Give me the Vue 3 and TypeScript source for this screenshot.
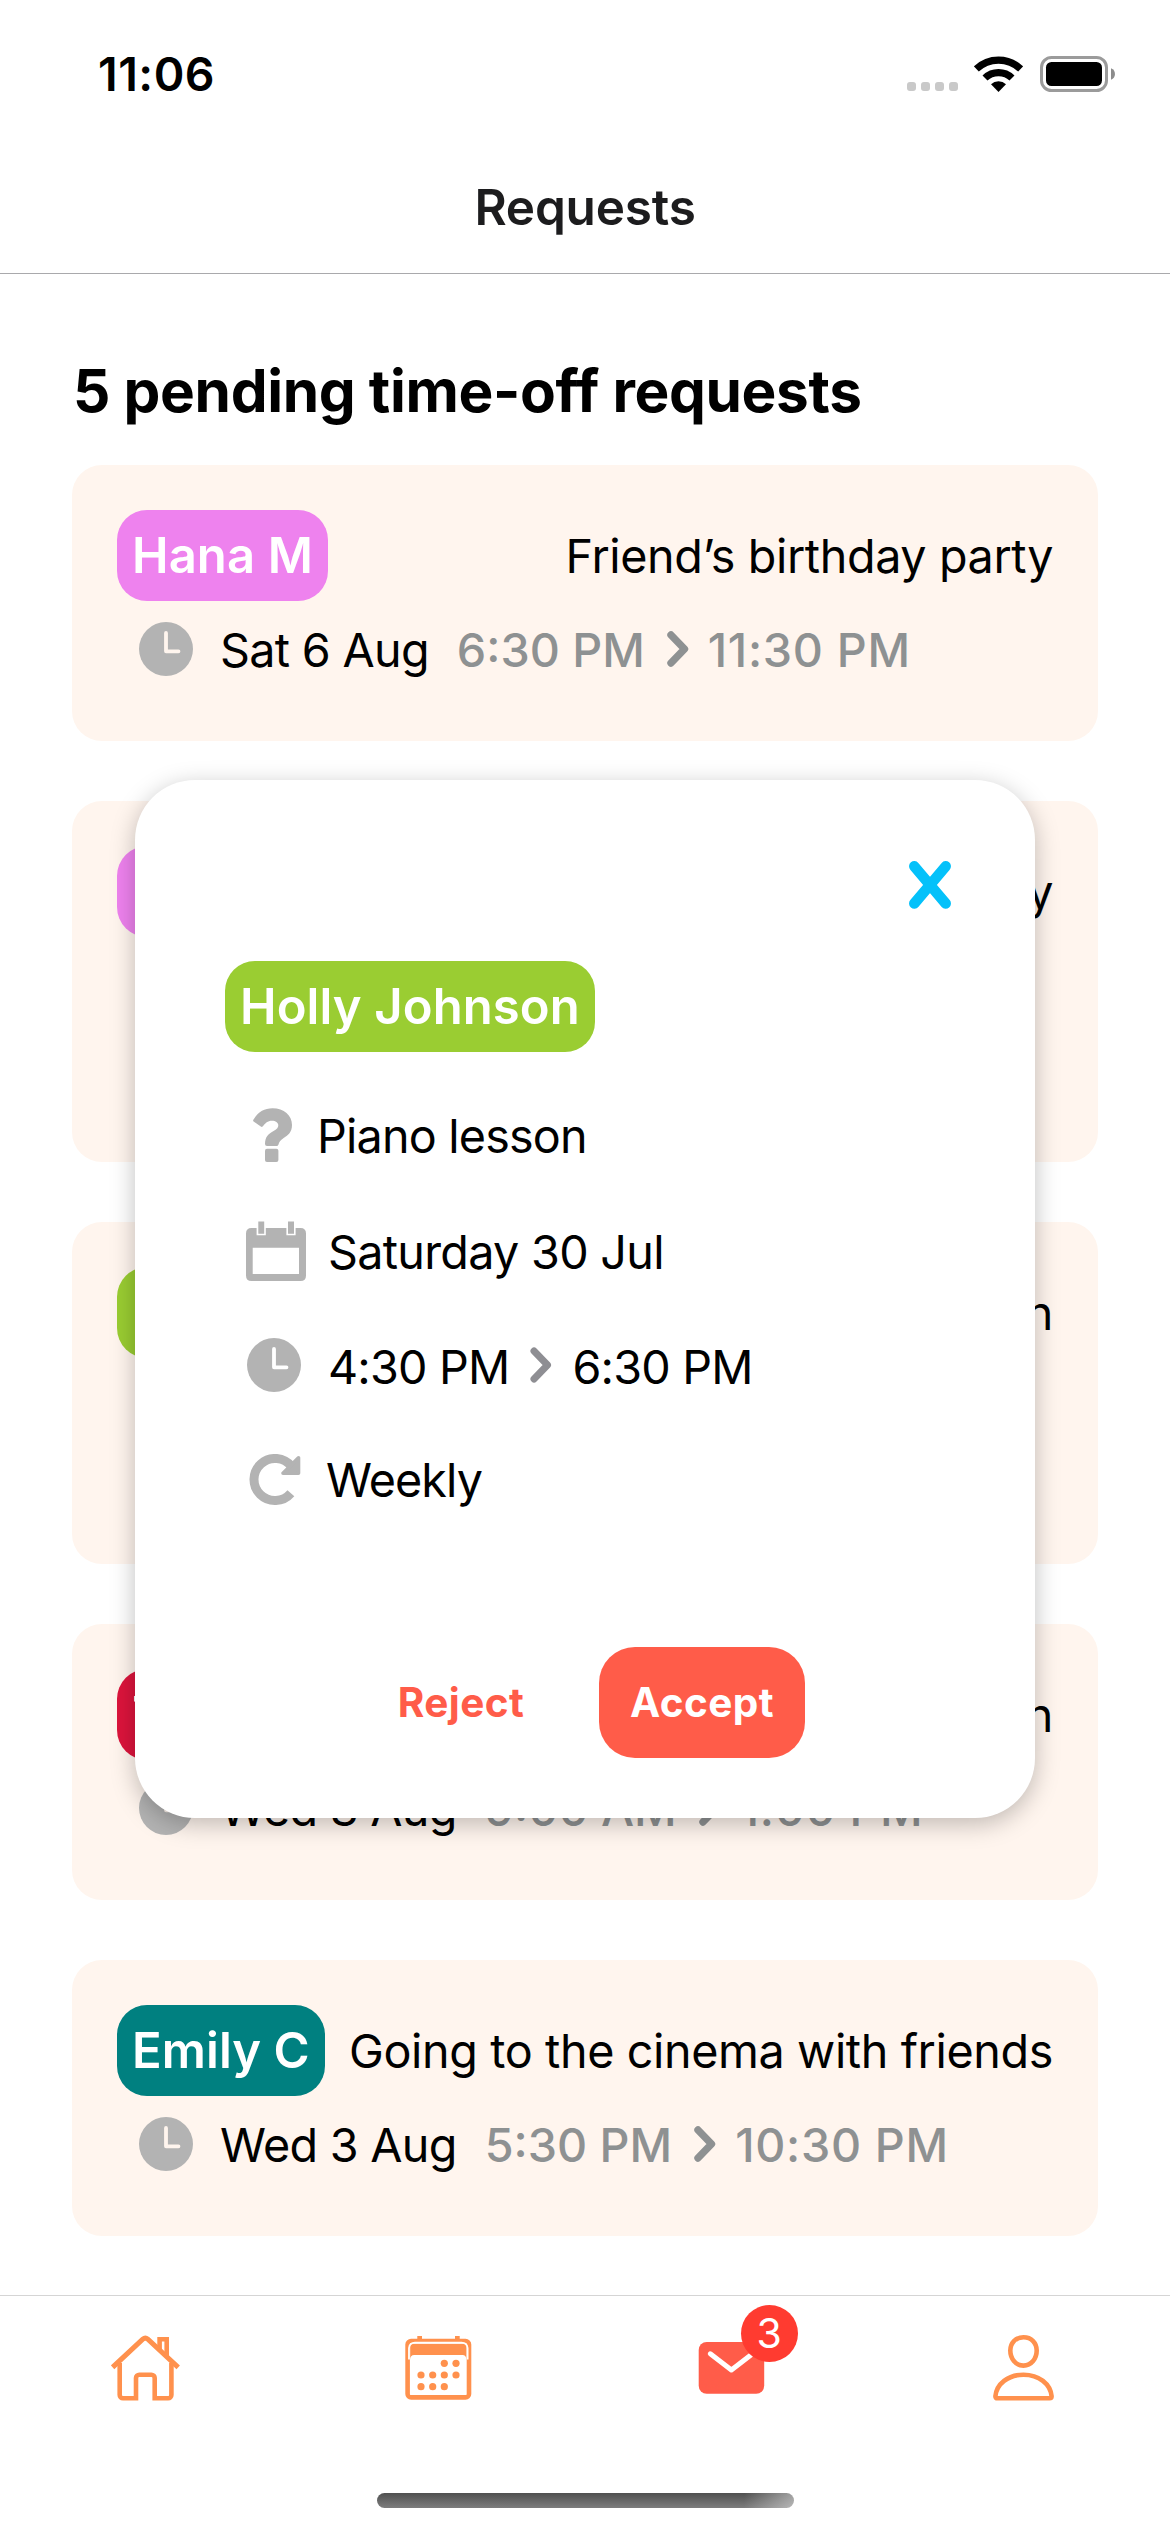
<script setup lang="ts">
interface Request {
  name: string
  color: string
  reason: string
  date?: string
  from?: string
  to?: string
  size?: 'medium' | 'large'
}

const requests: Request[] = [
  { name: 'Hana M', color: '#ee82ee', reason: 'Friend’s birthday party', date: 'Sat 6 Aug', from: '6:30 PM', to: '11:30 PM' },
  { name: 'Hana M', color: '#ee82ee', reason: 'Study day', size: 'large' },
  { name: 'Holly J', color: '#9acd32', reason: 'Piano lesson', size: 'medium' },
  { name: 'Tom B', color: '#dc143c', reason: 'Vacation', date: 'Wed 3 Aug', from: '9:00 AM', to: '1:00 PM' },
  { name: 'Emily C', color: '#008080', reason: 'Going to the cinema with friends', date: 'Wed 3 Aug', from: '5:30 PM', to: '10:30 PM' },
]

const dots = [
  [39.3, 28.3], [51, 28.3],
  [16, 40], [27.7, 40], [39.3, 40], [51, 40],
  [16, 51.7], [27.7, 51.7], [39.3, 51.7],
]
</script>

<template>
  <div class="screen">
    <header class="status">
      <span class="clock-text">11:06</span>
      <div class="status-icons">
        <div class="cell"><i></i><i></i><i></i><i></i></div>
        <svg class="wifi" width="49" height="36" viewBox="0 0 49 36">
          <path d="M2.3 13A32 32 0 0 1 46.7 13M11 22A19.5 19.5 0 0 1 38 22" fill="none" stroke="#000" stroke-width="7.2" />
          <path d="M24.5 36L17 28.3A11 11 0 0 1 32 28.3Z" />
        </svg>
        <svg width="76" height="36" viewBox="0 0 76 36">
          <rect x="1.5" y="1.5" width="65" height="33" rx="10" fill="none" stroke="#9b9b9b" stroke-width="3" />
          <rect x="6" y="6" width="56" height="24" rx="5.5" />
          <path d="M71 12.3C76.3 14 76.3 22 71 23.7Z" fill="#8c8c8c" />
        </svg>
      </div>
    </header>
    <div class="nav"><h1>Requests</h1></div>

    <main class="content">
      <h2>5 pending time-off requests</h2>
      <section v-for="(r, i) in requests" :key="i" class="card" :class="r.size">
        <div class="card-top">
          <span class="pill" :style="{ background: r.color }">{{ r.name }}</span>
          <span class="reason">{{ r.reason }}</span>
        </div>
        <div v-if="r.date" class="when">
          <svg class="clock" width="54" height="54" viewBox="0 0 54 54">
            <circle cx="27" cy="27" r="27" fill="#b3b3b3" />
            <path d="M27 11V29.3H39.5" fill="none" stroke="#fff5ee" stroke-width="3.8" stroke-linecap="round" stroke-linejoin="round" />
          </svg>
          <span class="date">{{ r.date }}</span>
          <span class="time">{{ r.from }}</span>
          <svg class="chev" width="22" height="36" viewBox="0 0 22 36">
            <path d="M4 4L17.5 18L4 32" fill="none" stroke="#8e9192" stroke-width="7.4" stroke-linecap="round" stroke-linejoin="round" />
          </svg>
          <span class="time until">{{ r.to }}</span>
        </div>
      </section>
    </main>

    <nav class="tabs">
      <div class="tab">
        <svg width="70" height="68" viewBox="0 0 70 68" fill="none" stroke="#ff914d" stroke-width="4.6">
          <path d="M1.6 32.3L31.8 4.2Q34.3 2 36.8 4.2L67.2 32.3" stroke-width="5" />
          <path d="M8.7 28V60a3.3 3.3 0 0 0 3.3 3.3H25V43a3.3 3.3 0 0 1 3.3-3.3H40.4a3.3 3.3 0 0 1 3.3 3.3V63.3H57a3.3 3.3 0 0 0 3.4-3.3V28" />
          <path d="M48.6 15V4.3H55.7V22" />
        </svg>
      </div>
      <div class="tab">
        <svg width="67" height="66" viewBox="0 0 67 66">
          <path d="M12.3 1H17V5H12.3ZM50 1H54.7V5H50Z" fill="#ff914d" />
          <rect x="2.6" y="6" width="61.4" height="56.4" rx="3.5" fill="#fff" stroke="#ff914d" stroke-width="4.6" />
          <path d="M5.2 25V9H61.4V25Q61.4 20 57.4 20H9.2Q5.2 20 5.2 25Z" fill="#ff914d" />
          <path d="M4 24.6V13Q4.6 7.6 10 7.6H56.6Q62 7.6 62.6 13V24.6" fill="none" stroke="#fff" stroke-width="1.8" />
          <circle v-for="(d, i) in dots" :key="i" :cx="d[0]" :cy="d[1]" r="3.6" fill="#ff914d" />
        </svg>
      </div>
      <div class="tab mail">
        <div class="mail-box">
          <svg width="67" height="52" viewBox="0 0 67 52">
            <rect x=".7" y="0" width="65.5" height="51.8" rx="8" fill="#ff5c49" />
            <path d="M12.3 11.8L33.4 28L54.5 11.8" fill="none" stroke="#fff" stroke-width="5" stroke-linecap="round" stroke-linejoin="round" />
          </svg>
          <span class="badge">3</span>
        </div>
      </div>
      <div class="tab">
        <svg width="61" height="66" viewBox="0 0 61 66" fill="none" stroke="#ff914d" stroke-width="4.6">
          <path d="M30.5 2.3C38.5 2.3 43.7 8 43.7 15.6C43.7 23.5 38.5 30.6 30.5 30.6S17.3 23.5 17.3 15.6C17.3 8 22.5 2.3 30.5 2.3Z" />
          <path d="M2.4 61.3C3.5 49 15 39.7 30.5 39.7S57.5 49 58.6 61.3Q58.6 63.3 56.6 63.3H4.4Q2.4 63.3 2.4 61.3Z" />
        </svg>
      </div>
      <div class="home-bar"></div>
    </nav>

    <div class="modal">
      <div class="modal-head">
        <svg width="42" height="48" viewBox="0 0 42 48">
          <path d="M5.3 5.3L36.7 42.5M36.7 5.3L5.3 42.5" stroke="#04c1fa" stroke-width="10.5" stroke-linecap="round" />
        </svg>
      </div>
      <span class="pill big">Holly Johnson</span>
      <div class="rows">
        <div class="row r1">
          <svg width="40" height="54" viewBox="0 0 40 54" fill="#b3b3b3">
            <path d="M.2 12C5 4 11 .3 19.5 .3C31 .3 39 7.5 39 17C39 24 35 27.5 31 29.8C27.5 32 26 34 25.5 36.5Q25 38 23.5 38H14Q12 38 12 36C12 29 15 26 21 22.8C24 21 25.3 19.5 25.3 17.3C25.3 14.5 22.5 12.7 19 12.7C14.5 12.7 12.5 15 9.8 18.3Q9 19.5 7.8 18.6L1 13.8Q-.2 13 .2 12Z" />
            <rect x="12" y="40.7" width="13.4" height="13.3" rx="2" />
          </svg>
          <span>Piano lesson</span>
        </div>
        <div class="row r2">
          <svg width="60" height="60" viewBox="0 0 60 60" fill="#b3b3b3">
            <path fill-rule="evenodd" d="M5.5 7H54.5Q60 7 60 12.500V54.500Q60 60 54.500 60H5.500Q0 60 0 54.500V12.500Q0 7 5.500 7ZM6.700 26.700V53H53V26.700Z" />
            <path d="M10.600 0H19.800V14.300H10.600ZM40.400 0H49.600V14.300H40.400Z" fill="#fff" />
            <path d="M12.300 .5H18.200V12.700H12.300ZM42 .5H48V12.700H42Z" />
          </svg>
          <span>Saturday 30 Jul</span>
        </div>
        <div class="row r3">
          <svg width="54" height="54" viewBox="0 0 54 54">
            <circle cx="27" cy="27" r="27" fill="#b3b3b3" />
            <path d="M27 11V29.3H39.5" fill="none" stroke="#fff" stroke-width="3.8" stroke-linecap="round" stroke-linejoin="round" />
          </svg>
          <span>4:30 PM</span>
          <svg class="chev" width="22" height="36" viewBox="0 0 22 36">
            <path d="M4 4L17.5 18L4 32" fill="none" stroke="#8e8e93" stroke-width="7" stroke-linecap="round" stroke-linejoin="round" />
          </svg>
          <span>6:30 PM</span>
        </div>
        <div class="row r4">
          <svg width="52" height="51" viewBox="0 0 52 51">
            <path d="M42.5 12.5A21 21 0 1 0 41.9 39.2" fill="none" stroke="#b3b3b3" stroke-width="9" />
            <path d="M49.5 3.8V19.3H34Z" fill="#b3b3b3" stroke="#b3b3b3" stroke-width="3.6" stroke-linejoin="round" />
          </svg>
          <span>Weekly</span>
        </div>
      </div>
      <div class="actions">
        <button class="reject">Reject</button>
        <button class="accept">Accept</button>
      </div>
    </div>
  </div>
</template>

<style>
body { margin: 0; background: #fff; }
</style>

<style scoped>
.screen {
  position: relative;
  width: 1170px;
  height: 2532px;
  overflow: hidden;
  background: #fff;
  color: #000;
  font-family: Inter, "Liberation Sans", sans-serif;
  display: flex;
  flex-direction: column;
}
svg { display: block; flex: none; }
span { white-space: nowrap; }
.status {
  height: 141px;
  padding: 7px 55px 0 98px;
  box-sizing: border-box;
  display: flex;
  justify-content: space-between;
  align-items: center;
}
.clock-text { font-size: 46.5px; font-weight: 600; letter-spacing: .5px; }
.status-icons { display: flex; align-items: center; width: 208px; }
.cell { display: flex; gap: 5px; margin-top: 25px; width: 67px; flex: none; }
.cell i { width: 9px; height: 9px; border-radius: 3px; background: #c9c9c9; }
.wifi { margin-top: -1px; margin-right: 17px; }
.nav {
  height: 132px;
  border-bottom: 1px solid #a9a9ac;
  display: flex;
  justify-content: center;
  align-items: center;
}
h1 { margin: 0; font-size: 49.5px; font-weight: 600; color: #1c1c1e; letter-spacing: -.2px; line-height: 60px; }
.content { padding: 0 72px; }
h2 { margin: 81px 0 39px; padding-left: 1px; font-size: 58.5px; line-height: 71px; font-weight: 700; letter-spacing: -.35px; white-space: nowrap; }
.card {
  background: #fff5ee;
  border-radius: 30px;
  box-sizing: border-box;
  height: 276px;
  padding: 45px;
  margin-bottom: 60px;
}
.card.medium { height: 342px; }
.card.large { height: 361px; }
.card-top { display: flex; justify-content: space-between; align-items: center; }
.pill {
  height: 91px;
  line-height: 92px;
  padding: 0 15px;
  border-radius: 30px;
  color: #fff;
  font-size: 49px;
  font-weight: 600;
  letter-spacing: .1px;
}
.reason { font-size: 46.7px; letter-spacing: -.38px; }
.when { height: 95px; display: flex; align-items: center; padding-left: 22px; }
.clock { margin-right: 27px; }
.date { font-size: 46.7px; letter-spacing: -.7px; margin-right: 28px; padding-top: 2px; }
.time { font-size: 46.7px; letter-spacing: 0; font-weight: 500; color: #8e9192; padding-top: 3px; }
.time.until { letter-spacing: .7px; }
.card .chev { margin: 0 19px 0 22px; }
.row .chev { margin: 0 20px 0 21px; }

.tabs {
  position: absolute;
  left: 0;
  right: 0;
  bottom: 0;
  height: 236px;
  border-top: 1px solid #d5d5d5;
  background: #fff;
  display: flex;
}
.tab { flex: 1; display: flex; justify-content: center; padding-top: 39px; }
.tab.mail { padding-top: 46px; }
.mail-box { position: relative; height: 52px; }
.badge {
  position: absolute;
  left: 43px;
  top: -37px;
  width: 57px;
  height: 57px;
  border-radius: 50%;
  background: #ff3b30;
  color: #fff;
  font-size: 41px;
  line-height: 56px;
  text-align: center;
}
.home-bar {
  position: absolute;
  left: 377px;
  bottom: 24px;
  width: 417px;
  height: 15px;
  border-radius: 7.5px;
  background: linear-gradient(90deg, rgba(255,255,255,0) 88%, rgba(255,255,255,.45)), linear-gradient(#505050, #7d7d7d);
}

.modal {
  position: absolute;
  left: 135px;
  top: 780px;
  width: 900px;
  height: 1038px;
  box-sizing: border-box;
  border-radius: 60px;
  background: #fff;
  box-shadow: 0 6px 24px rgba(0, 0, 0, .25);
  padding: 81px 84px 60px 90px;
  display: flex;
  flex-direction: column;
  align-items: flex-start;
}
.modal-head { align-self: stretch; display: flex; justify-content: flex-end; height: 100px; }
.big { background: #9acd32; }
.rows { margin-top: 25px; }
.row { display: flex; align-items: center; height: 116px; font-size: 46.7px; letter-spacing: -.7px; }
.row span { padding-top: 2px; }
.r1 { padding-left: 28px; gap: 24px; }
.r1 span { letter-spacing: -.8px; }
.r2 { padding-left: 21px; gap: 22px; }
.r3 { padding-left: 22px; height: 112px; letter-spacing: -.8px; }
.r3 span { padding-top: 4px; }
.r3 > svg:first-child { margin-right: 27px; }
.r4 { padding-left: 24px; gap: 25px; height: 117px; }
.r4 span { letter-spacing: -.9px; padding-top: 1px; }
.actions { margin-top: 109px; padding-left: 140px; display: flex; }
button {
  border: 0;
  background: none;
  font-family: inherit;
  font-size: 40.5px;
  font-weight: 700;
  letter-spacing: .45px;
  height: 111px;
  border-radius: 36px;
  padding: 0;
}
.reject { width: 192px; color: #ff5c49; }
.accept { width: 206px; margin-left: 42px; background: #ff5c49; color: #fff; }
</style>
